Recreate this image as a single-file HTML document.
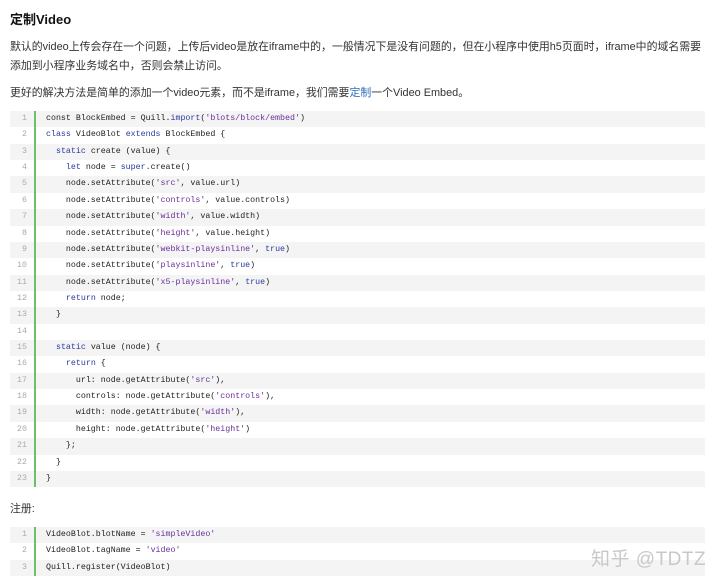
<!DOCTYPE html>
<html><head><meta charset="utf-8"><style>
body{margin:0;background:#fff;width:720px;height:588px;overflow:hidden;font-family:"Liberation Sans","Noto Sans CJK SC",sans-serif;color:#1a1a1a;position:relative}
.h{position:absolute;left:10px;top:9px;font-size:13px;font-weight:bold;color:#111}
.p{position:absolute;left:10px;font-size:10.9px;color:#333;white-space:nowrap}
.code{position:absolute;left:10px;width:695px}
.r{height:16.36px;display:flex;font-family:"Liberation Mono",monospace;font-size:8.3px;line-height:16.36px;color:#222;white-space:pre}
.r:nth-child(odd){background:#f4f4f4}
.n{width:17px;text-align:right;color:#aaa;padding-right:7px;border-right:2px solid #6cc06c;box-sizing:content-box;flex:none}
.c{padding-left:10px}
.k{color:#2a3a9e}.s{color:#6a2f9a}
.wm{position:absolute;left:591px;top:544px;font-size:19px;color:#c8c8c8;white-space:nowrap;font-family:"Liberation Sans","Noto Sans CJK SC",sans-serif;letter-spacing:0.5px}
</style></head><body>
<div class="h">定制Video</div>
<div class="p" style="top:38px">默认的video上传会存在一个问题，上传后video是放在iframe中的，一般情况下是没有问题的，但在小程序中使用h5页面时，iframe中的域名需要</div>
<div class="p" style="top:57px">添加到小程序业务域名中，否则会禁止访问。</div>
<div class="p" style="top:84px">更好的解决方法是简单的添加一个video元素，而不是iframe，我们需要<span style="color:#2a6bb8">定制</span>一个Video Embed。</div>
<div class="code" style="top:111px">
<div class="r"><span class="n">1</span><span class="c">const BlockEmbed = Quill.<span class="k">import</span>(<span class="s">'blots/block/embed'</span>)</span></div>
<div class="r"><span class="n">2</span><span class="c"><span class="k">class</span> VideoBlot <span class="k">extends</span> BlockEmbed {</span></div>
<div class="r"><span class="n">3</span><span class="c">  <span class="k">static</span> create (value) {</span></div>
<div class="r"><span class="n">4</span><span class="c">    <span class="k">let</span> node = <span class="k">super</span>.create()</span></div>
<div class="r"><span class="n">5</span><span class="c">    node.setAttribute(<span class="s">'src'</span>, value.url)</span></div>
<div class="r"><span class="n">6</span><span class="c">    node.setAttribute(<span class="s">'controls'</span>, value.controls)</span></div>
<div class="r"><span class="n">7</span><span class="c">    node.setAttribute(<span class="s">'width'</span>, value.width)</span></div>
<div class="r"><span class="n">8</span><span class="c">    node.setAttribute(<span class="s">'height'</span>, value.height)</span></div>
<div class="r"><span class="n">9</span><span class="c">    node.setAttribute(<span class="s">'webkit-playsinline'</span>, <span class="k">true</span>)</span></div>
<div class="r"><span class="n">10</span><span class="c">    node.setAttribute(<span class="s">'playsinline'</span>, <span class="k">true</span>)</span></div>
<div class="r"><span class="n">11</span><span class="c">    node.setAttribute(<span class="s">'x5-playsinline'</span>, <span class="k">true</span>)</span></div>
<div class="r"><span class="n">12</span><span class="c">    <span class="k">return</span> node;</span></div>
<div class="r"><span class="n">13</span><span class="c">  }</span></div>
<div class="r"><span class="n">14</span><span class="c"> </span></div>
<div class="r"><span class="n">15</span><span class="c">  <span class="k">static</span> value (node) {</span></div>
<div class="r"><span class="n">16</span><span class="c">    <span class="k">return</span> {</span></div>
<div class="r"><span class="n">17</span><span class="c">      url: node.getAttribute(<span class="s">'src'</span>),</span></div>
<div class="r"><span class="n">18</span><span class="c">      controls: node.getAttribute(<span class="s">'controls'</span>),</span></div>
<div class="r"><span class="n">19</span><span class="c">      width: node.getAttribute(<span class="s">'width'</span>),</span></div>
<div class="r"><span class="n">20</span><span class="c">      height: node.getAttribute(<span class="s">'height'</span>)</span></div>
<div class="r"><span class="n">21</span><span class="c">    };</span></div>
<div class="r"><span class="n">22</span><span class="c">  }</span></div>
<div class="r"><span class="n">23</span><span class="c">}</span></div>
</div>
<div class="p" style="top:500px">注册:</div>
<div class="code" style="top:527px">
<div class="r"><span class="n">1</span><span class="c">VideoBlot.blotName = <span class="s">'simpleVideo'</span></span></div>
<div class="r"><span class="n">2</span><span class="c">VideoBlot.tagName = <span class="s">'video'</span></span></div>
<div class="r"><span class="n">3</span><span class="c">Quill.register(VideoBlot)</span></div>
</div>
<div class="wm">知乎 @TDTZ</div>
</body></html>
